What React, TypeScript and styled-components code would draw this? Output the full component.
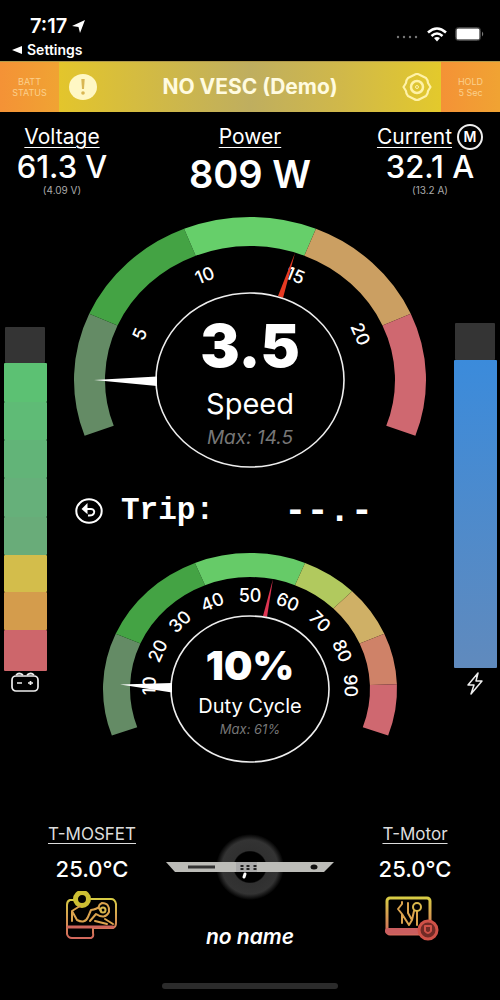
import React from "react";
import styled, { createGlobalStyle } from "styled-components";

const GlobalStyle = createGlobalStyle`
  * { box-sizing: border-box; }
  body { margin: 0; background: #000; color: #fff; font-family: Inter, "Liberation Sans", sans-serif; }
  button { font: inherit; color: inherit; border: 0; padding: 0; background: none; cursor: pointer; }
  svg { display: block; }
`;

const Screen = styled.div`
  display: flex;
  flex-direction: column;
  min-height: 100vh;
  background: #000;
`;

const StatusBar = styled.header`
  display: flex;
  justify-content: space-between;
  height: 61px;
  padding: 14px 16px 0 12px;
`;
const StatusLeft = styled.div`
  display: flex;
  flex-direction: column;
`;
const Clock = styled.div`
  display: flex;
  align-items: center;
  gap: 5px;
  padding-left: 18px;
  font-size: 20px;
  line-height: 24px;
  font-weight: 600;
`;
const BackLink = styled.a`
  display: flex;
  align-items: center;
  gap: 5px;
  color: #fff;
  font-size: 14px;
  line-height: 24px;
  font-weight: 600;
  text-decoration: none;
`;
const StatusIcons = styled.div`
  display: flex;
  align-items: center;
  gap: 8px;
  height: 40px;
`;

const Banner = styled.div`
  display: flex;
  align-items: stretch;
  height: 51px;
  background: linear-gradient(90deg, #e3c52c 12%, #bfae5f 50%, #d0b84a 68%, #e3c92c 88%);
  border-top: 1px solid #b09a4c;
`;
const BannerAction = styled.button`
  width: 59px;
  background: linear-gradient(90deg, #f49236, #f0a333);
  color: #fbd08c;
  font-size: 9px;
  line-height: 11px;
`;
const BannerBody = styled.div`
  flex: 1;
  display: flex;
  align-items: center;
  justify-content: space-between;
  padding: 0 9px;
`;
const BannerTitle = styled.h1`
  margin: 0;
  color: #fffbe0;
  font-size: 21px;
  line-height: 26px;
  font-weight: 700;
`;

const Metrics = styled.section`
  display: grid;
  grid-template-columns: 140px 1fr 140px;
  padding-top: 12px;
  height: 88px;
`;
const Metric = styled.div<{ $inset?: boolean }>`
  display: flex;
  flex-direction: column;
  align-items: center;
  padding-right: ${(p) => (p.$inset ? 16 : 0)}px;
`;
const MetricHead = styled.div`
  display: flex;
  align-items: center;
  gap: 5px;
  height: 26px;
`;
const MetricLabel = styled.span`
  font-size: 21px;
  line-height: 26px;
  text-decoration: underline;
  text-decoration-thickness: 1px;
  text-underline-offset: 3px;
`;
const ModeButton = styled.button`
  width: 26px;
  height: 26px;
  border: 2px solid #eee;
  border-radius: 50%;
  font-size: 14px;
  line-height: 20px;
  font-weight: 600;
`;
const MetricValue = styled.div<{ $large?: boolean }>`
  font-size: ${(p) => (p.$large ? 38 : 31)}px;
  line-height: ${(p) => (p.$large ? 48 : 34)}px;
  font-weight: ${(p) => (p.$large ? 600 : 500)};
  white-space: nowrap;
`;
const MetricNote = styled.div`
  color: #aaa;
  font-size: 10px;
  line-height: 12px;
`;

const Main = styled.main`
  display: flex;
  justify-content: space-between;
  padding: 0 3px;
`;
const BarColumn = styled.div<{ $top: number }>`
  display: flex;
  flex-direction: column;
  align-items: center;
  width: 44px;
  padding-top: ${(p) => p.$top}px;
`;
const Cell = styled.div<{ $color: string; $height: number; $narrow?: boolean }>`
  width: ${(p) => (p.$narrow ? 40 : 43)}px;
  height: ${(p) => p.$height}px;
  background: ${(p) => p.$color};
  border-radius: 1px;
`;
const BarIcon = styled.div<{ $gap: number }>`
  padding-top: ${(p) => p.$gap}px;
`;

const Gauges = styled.div`
  flex: 1;
  display: flex;
  flex-direction: column;
  align-items: center;
  padding-top: 12px;
`;
const Trip = styled.div`
  display: flex;
  align-items: center;
  width: 350px;
  height: 77px;
  padding-right: 52px;
  font-family: "Liberation Mono", monospace;
  font-weight: 700;
`;
const TripLabel = styled.span`
  padding-left: 18px;
  font-size: 31px;
  line-height: 36px;
`;
const TripValue = styled.span`
  margin-left: auto;
  font-size: 37px;
  line-height: 36px;
`;

const Footer = styled.footer`
  display: grid;
  grid-template-columns: 140px 1fr 140px;
  padding: 57px 15px 0;
`;
const Temp = styled.div<{ $inset?: boolean }>`
  display: flex;
  flex-direction: column;
  align-items: center;
  padding-left: ${(p) => (p.$inset ? 14 : 0)}px;
`;
const TempLabel = styled.div`
  font-size: 17px;
  line-height: 24px;
  text-decoration: underline;
  text-decoration-thickness: 1px;
  text-underline-offset: 3px;
  color: #ddd;
`;
const TempValue = styled.div`
  padding: 10px 0 9px;
  font-size: 22px;
  line-height: 26px;
  font-weight: 500;
`;
const Board = styled.div`
  display: flex;
  flex-direction: column;
  align-items: center;
`;
const BoardName = styled.div`
  padding-top: 10px;
  font-size: 21px;
  line-height: 26px;
  font-style: italic;
  font-weight: 600;
`;
const HomeIndicator = styled.div`
  width: 176px;
  height: 6px;
  margin: auto auto 11px;
  border-radius: 3px;
  background: #2b2b2b;
`;

type Segment = { from: number; to: number; color: string };
type Tick = { at: number; text: string };
type GaugeProps = {
  width: number;
  height: number;
  cx: number;
  cy: number;
  outer: [number, number];
  inner: [number, number];
  dial: [number, number];
  labels: [number, number];
  labelSize: number;
  segments: Segment[];
  ticks: Tick[];
  needle: string;
  marker: string;
  markerColor: string;
  value: string;
  valueSize: number;
  valueY: number;
  name: string;
  nameSize: number;
  nameY: number;
  max: string;
  maxSize: number;
  maxY: number;
};

// Angles run clockwise from the left end of the horizontal axis.
const polar = (cx: number, cy: number, r: [number, number], deg: number) => {
  const a = (deg * Math.PI) / 180;
  return [cx - r[0] * Math.cos(a), cy - r[1] * Math.sin(a)];
};

function Gauge(g: GaugeProps) {
  const arc = (s: Segment) => {
    const [x1, y1] = polar(g.cx, g.cy, g.outer, s.from);
    const [x2, y2] = polar(g.cx, g.cy, g.outer, s.to);
    const [x3, y3] = polar(g.cx, g.cy, g.inner, s.to);
    const [x4, y4] = polar(g.cx, g.cy, g.inner, s.from);
    return `M${x1} ${y1}A${g.outer[0]} ${g.outer[1]} 0 0 1 ${x2} ${y2}L${x3} ${y3}A${g.inner[0]} ${g.inner[1]} 0 0 0 ${x4} ${y4}Z`;
  };
  return (
    <svg width={g.width} height={g.height} viewBox={`0 0 ${g.width} ${g.height}`} role="img" aria-label={`${g.name} ${g.value}`} fontFamily="Inter, sans-serif" textAnchor="middle" fill="#fff">
      {g.segments.map((s) => (
        <path key={s.from} d={arc(s)} fill={s.color} />
      ))}
      {g.ticks.map((t) => {
        const [x, y] = polar(g.cx, g.cy, g.labels, t.at);
        return (
          <text key={t.text} transform={`translate(${x} ${y}) rotate(${t.at - 90})`} dominantBaseline="central" fontSize={g.labelSize} fontWeight="500">
            {t.text}
          </text>
        );
      })}
      <path d={g.marker} fill={g.markerColor} />
      <ellipse cx={g.cx} cy={g.cy} rx={g.dial[0]} ry={g.dial[1]} fill="#000" stroke="#eee" strokeWidth="1.6" />
      <path d={g.needle} fill="#fff" />
      <text x={g.cx} y={g.valueY} fontSize={g.valueSize} fontWeight="900">{g.value}</text>
      <text x={g.cx} y={g.nameY} fontSize={g.nameSize}>{g.name}</text>
      <text x={g.cx} y={g.maxY} fontSize={g.maxSize} fontStyle="italic" fill="#777">{g.max}</text>
    </svg>
  );
}

const speedSegments: Segment[] = [
  { from: -20, to: 24, color: "#648b65" },
  { from: 24, to: 68, color: "#44a344" },
  { from: 68, to: 112, color: "#66cf6a" },
  { from: 112, to: 156, color: "#cb9f62" },
  { from: 156, to: 200, color: "#cf6870" },
];
const dutySegments: Segment[] = [
  { from: -20, to: 24, color: "#648b65" },
  { from: 24, to: 68, color: "#44a344" },
  { from: 68, to: 112, color: "#66cb68" },
  { from: 112, to: 134, color: "#b1c95e" },
  { from: 134, to: 156, color: "#cfb066" },
  { from: 156, to: 178, color: "#cf8268" },
  { from: 178, to: 200, color: "#cf6870" },
];
const speedTicks: Tick[] = [5, 10, 15, 20].map((n) => ({ at: -20 + n * 8.8, text: `${n}` }));
const dutyTicks: Tick[] = [10, 20, 30, 40, 50, 60, 70, 80, 90].map((n) => ({ at: -20 + n * 2.2, text: `${n}` }));

const batteryCells = [
  { color: "#5cc173", height: 39 },
  { color: "#5fbb76", height: 38 },
  { color: "#62b478", height: 38 },
  { color: "#66b07a", height: 39 },
  { color: "#69ac79", height: 38 },
  { color: "#d3bd4b", height: 37 },
  { color: "#d49c4c", height: 38 },
  { color: "#cd666b", height: 41 },
];

export default function App() {
  return (
    <Screen>
      <GlobalStyle />
      <StatusBar>
        <StatusLeft>
          <Clock>
            7:17
            <svg width="13" height="13" viewBox="0 0 13 13"><path d="M13 0L8 13L6.500 7L0 6Z" fill="#fff" /></svg>
          </Clock>
          <BackLink href="#settings">
            <svg width="10" height="8" viewBox="0 0 10 8"><path d="M0 4L10 0V8Z" fill="#fff" /></svg>
            Settings
          </BackLink>
        </StatusLeft>
        <StatusIcons>
          <svg width="23" height="10" viewBox="0 0 23 10" fill="#777">
            <circle cx="2" cy="8" r="1.200" /><circle cx="8" cy="8" r="1.200" /><circle cx="14" cy="8" r="1.200" /><circle cx="20" cy="8" r="1.200" />
          </svg>
          <svg width="20" height="15" viewBox="0 0 20 15" fill="none" stroke="#fff" strokeWidth="2.600">
            <path d="M1 5.500Q10 -2.500 19 5.500" /><path d="M4.500 9Q10 4 15.500 9" /><path d="M7 11Q10 9 13 11L10 14.500Z" fill="#fff" stroke="none" />
          </svg>
          <svg width="29" height="15" viewBox="0 0 29 15">
            <rect x="0.500" y="0.500" width="25" height="13" rx="3" fill="none" stroke="#444" />
            <rect x="1.500" y="1.500" width="23" height="11" rx="1.500" fill="#fff" />
            <path d="M27 4.500Q29.500 7 27 9.500Z" fill="#777" />
          </svg>
        </StatusIcons>
      </StatusBar>

      <Banner>
        <BannerAction>BATT<br />STATUS</BannerAction>
        <BannerBody>
          <svg width="30" height="28" viewBox="0 0 30 28">
            <ellipse cx="15" cy="14" rx="14" ry="13" fill="#fff7c4" />
            <path d="M13.300 6H16.700L16 16H14Z" fill="#d9b653" /><circle cx="15" cy="20" r="1.800" fill="#d9b653" />
          </svg>
          <BannerTitle>NO VESC (Demo)</BannerTitle>
          <svg width="30" height="28" viewBox="0 0 30 28" fill="none" stroke="#fff2a8">
            <path d="M12 2Q15 0 18 2L24 5Q26 7 26 10L28.500 14L26 18Q26 21 24 23L18 26Q15 28 12 26L6 23Q4 21 4 18L1.500 14L4 10Q4 7 6 5Z" strokeWidth="2.200" strokeLinejoin="round" />
            <circle cx="15" cy="14" r="6" strokeWidth="2.500" /><circle cx="15" cy="14" r="1.500" strokeWidth="1" />
          </svg>
        </BannerBody>
        <BannerAction>HOLD<br />5 Sec</BannerAction>
      </Banner>

      <Metrics>
        <Metric $inset>
          <MetricHead><MetricLabel>Voltage</MetricLabel></MetricHead>
          <MetricValue>61.3 V</MetricValue>
          <MetricNote>(4.09 V)</MetricNote>
        </Metric>
        <Metric>
          <MetricHead><MetricLabel>Power</MetricLabel></MetricHead>
          <MetricValue $large>809 W</MetricValue>
        </Metric>
        <Metric>
          <MetricHead>
            <MetricLabel>Current</MetricLabel>
            <ModeButton aria-label="Motor current">M</ModeButton>
          </MetricHead>
          <MetricValue>32.1 A</MetricValue>
          <MetricNote>(13.2 A)</MetricNote>
        </Metric>
      </Metrics>

      <Main>
        <BarColumn $top={127}>
          <Cell $color="#343434" $height={36} $narrow />
          {batteryCells.map((c) => (
            <Cell key={c.color} $color={c.color} $height={c.height} />
          ))}
          <BarIcon $gap={1}>
            <svg width="28" height="20" viewBox="0 0 28 20" fill="none" stroke="#eee" strokeWidth="1.700">
              <rect x="1" y="4" width="26" height="15" rx="4" /><path d="M5 3Q8 0 12 3M16 3Q20 0 23 3" /><path d="M6 11H11M17 11H22M19.500 9V13" />
            </svg>
          </BarIcon>
        </BarColumn>

        <Gauges>
          <Gauge
            width={360} height={260} cx={180} cy={168}
            outer={[176, 163]} inner={[145, 134]} dial={[94, 87]} labels={[121, 113]} labelSize={18}
            segments={speedSegments} ticks={speedTicks}
            needle="M24 168L87 164.500V174Z"
            marker="M225 41L208 84L213 86Z" markerColor="#e63a22"
            value="3.5" valueSize={59} valueY={155}
            name="Speed" nameSize={29} nameY={202}
            max="Max: 14.5" maxSize={19} maxY={232}
          />
          <Trip>
            <button aria-label="Reset trip">
              <svg width="28" height="28" viewBox="0 0 28 28" fill="none" stroke="#fff" strokeWidth="2">
                <ellipse cx="14" cy="14" rx="12.700" ry="11.800" />
                <path d="M9 12H16Q20 12.500 19 16Q18 19 13 18.500" /><path d="M11.500 8.500L8 12L11.500 15Z" fill="#fff" />
              </svg>
            </button>
            <TripLabel>Trip:</TripLabel>
            <TripValue>--.-</TripValue>
          </Trip>
          <Gauge
            width={300} height={216} cx={150} cy={140}
            outer={[147, 136]} inner={[120, 112]} dial={[79, 73]} labels={[101, 94]} labelSize={18}
            segments={dutySegments} ticks={dutyTicks}
            needle="M20 135.500L72 134V143.500Z"
            marker="M173 30L163 67L167 68Z" markerColor="#df3552"
            value="10%" valueSize={40} valueY={131}
            name="Duty Cycle" nameSize={20} nameY={164}
            max="Max: 61%" maxSize={13} maxY={185}
          />
        </Gauges>

        <BarColumn $top={123}>
          <Cell $color="#343434" $height={37} $narrow />
          <Cell $color="linear-gradient(#3b8bdb, #608abd)" $height={308} />
          <BarIcon $gap={3}>
            <svg width="20" height="26" viewBox="0 0 20 26" fill="none" stroke="#eee" strokeWidth="1.500" strokeLinejoin="round">
              <path d="M13 2L3 14H9L6 23L17 10H11Z" />
            </svg>
          </BarIcon>
        </BarColumn>
      </Main>

      <Footer>
        <Temp $inset>
          <TempLabel>T-MOSFET</TempLabel>
          <TempValue>25.0°C</TempValue>
          <svg width="54" height="50" viewBox="0 0 54 50" fill="none" strokeWidth="2" strokeLinecap="round" strokeLinejoin="round">
            <defs><linearGradient id="warm" x1="0" y1="0" x2="0" y2="1"><stop offset="0" stopColor="#d8cc45" /><stop offset="1" stopColor="#d3685c" /></linearGradient></defs>
            <path d="M10 9H5Q2 10 2 14V43Q3 47 7 47H26Q29 46 28 42V37H48Q51 36 51 32V13Q50 8 46 8H24" stroke="url(#warm)" />
            <path d="M3 36H48" stroke="#cf665c" strokeWidth="3" />
            <circle cx="17" cy="8" r="6.500" stroke="#cdbf33" strokeWidth="5" />
            <path d="M15 15L7 20V30M7 20L12 29Q20 33 23 26L26 19Q32 18 34 16M25 30L31 23Q40 29 44 21Q45 12 37 12Q31 15 36 20M30 30L42 33M40 28L48 33" stroke="#dba34e" />
            <circle cx="38" cy="19" r="2.500" stroke="#d9b84d" />
          </svg>
        </Temp>
        <Board>
          <svg width="170" height="92" viewBox="0 0 170 92">
            <defs>
              <radialGradient id="wheel"><stop offset="0.460" stopColor="#000" /><stop offset="0.500" stopColor="#303030" /><stop offset="0.820" stopColor="#333" /><stop offset="1" stopColor="#000" /></radialGradient>
            </defs>
            <ellipse cx="85" cy="45" rx="34" ry="33" fill="url(#wheel)" />
            <path d="M1 40H169L159 50H10Z" fill="#bcbcb8" />
            <path d="M23 45H50" stroke="#333" strokeWidth="3" />
            <path d="M71 40H92V50H71Z" fill="#aaa" />
            <path d="M77 43V48M83 43V48M90 43V48" stroke="#222" strokeWidth="3" strokeDasharray="2 1" />
            <ellipse cx="149" cy="45" rx="3.500" ry="2.500" fill="#111" />
            <path d="M80 52L79 55" stroke="#fff" strokeWidth="3" strokeLinecap="round" />
          </svg>
          <BoardName>no name</BoardName>
        </Board>
        <Temp>
          <TempLabel>T-Motor</TempLabel>
          <TempValue>25.0°C</TempValue>
          <svg width="60" height="50" viewBox="0 0 60 50" fill="none" strokeLinecap="round" strokeLinejoin="round">
            <rect x="2" y="7" width="43" height="36" rx="3" stroke="url(#warm)" strokeWidth="3" />
            <path d="M3 40H34" stroke="#ca5e5f" strokeWidth="6" />
            <path d="M17 32V23L13 18L17 13V11M17 23L24 34L27 29L23 22V12M32 34V20M27 29L29 20" stroke="#dba34e" strokeWidth="2" />
            <circle cx="32" cy="16" r="4" stroke="#d9b84d" strokeWidth="2" />
            <circle cx="43" cy="39" r="9" fill="#702a26" stroke="#cf5148" strokeWidth="3" />
            <path d="M40 35V40Q43 44 46 40V35Z" stroke="#cf5148" strokeWidth="2" />
          </svg>
        </Temp>
      </Footer>
      <HomeIndicator />
    </Screen>
  );
}
